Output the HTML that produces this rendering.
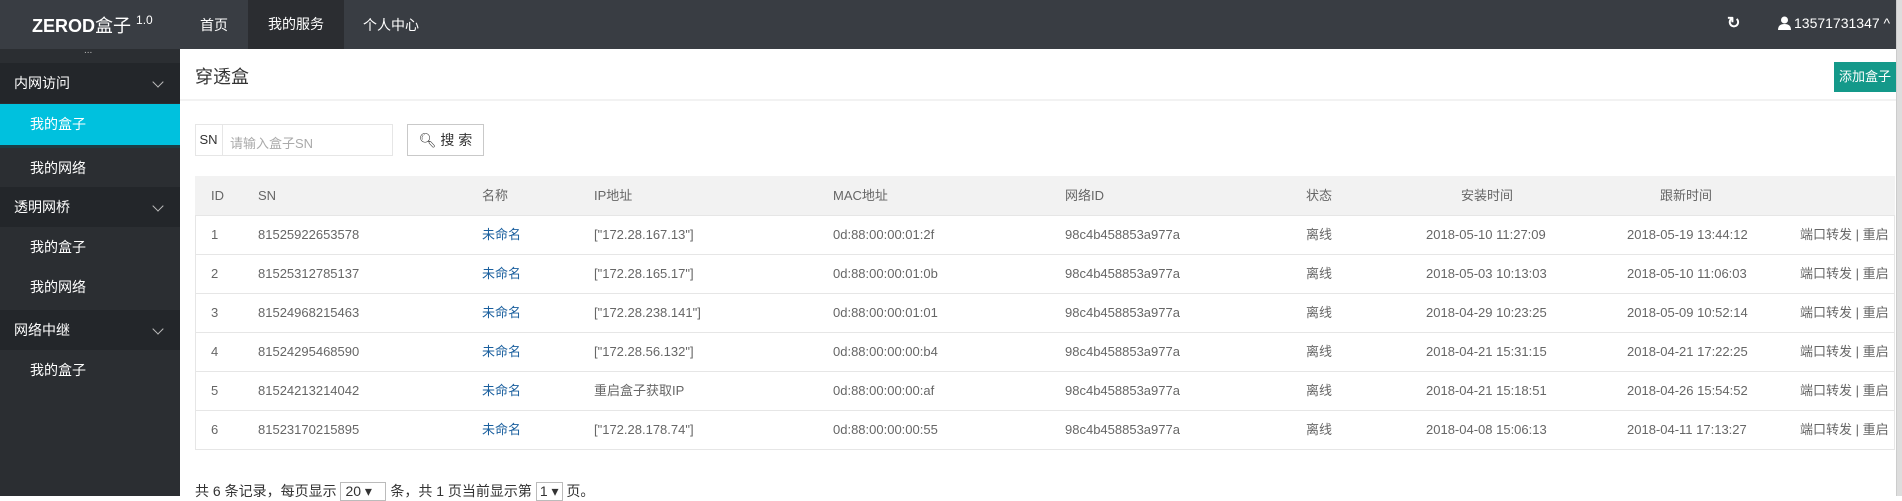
<!DOCTYPE html>
<html><head><meta charset="utf-8"><style>
*{margin:0;padding:0;box-sizing:border-box}
body{width:1902px;height:496px;overflow:hidden;background:#fff;font-family:"Liberation Sans","Noto Sans CJK SC",sans-serif;font-size:13px;color:#666;position:relative}
.abs{position:absolute;white-space:nowrap}
#hdr{position:absolute;left:0;top:0;width:1902px;height:49px;background:#393d43}
#side{position:absolute;left:0;top:49px;width:180px;height:447px;background:#2b2e32}
.sg{position:absolute;left:0;width:180px;height:40px;background:#23262a;color:#fff;font-size:14px;line-height:40px;padding-left:14px}
.si{position:absolute;left:0;width:180px;height:40px;color:#fff;font-size:14px;line-height:40px;padding-left:30px}
.chev{position:absolute;right:18px;top:15px;width:8px;height:8px;border-right:1px solid #bbb;border-bottom:1px solid #bbb;transform:rotate(45deg)}
.row{position:absolute;left:195px;width:1700px;height:39px;border-bottom:1px solid #e6e6e6;line-height:38px}
.row span{position:absolute}
.lnk{color:#1a5f9e}
#scroll{position:absolute;right:0;top:0;width:6px;height:496px;background:#ddd;border-left:1px solid #ccc}
</style></head><body>
<div id="hdr">
 <div class="abs" style="left:32px;top:12px;color:#fff;font-size:18px;font-weight:bold">ZEROD<span style="font-weight:normal">盒子</span> <sup style="font-size:12px;font-weight:normal;vertical-align:8px">1.0</sup></div>
 <div class="abs" style="left:200px;top:15px;color:#fff;font-size:14px">首页</div>
 <div class="abs" style="left:248px;top:0;width:96px;height:49px;background:#2b2d31;color:#fff;font-size:14px;line-height:49px;text-align:center">我的服务</div>
 <div class="abs" style="left:363px;top:15px;color:#fff;font-size:14px">个人中心</div>
 <div class="abs" style="left:1727px;top:13px;color:#fff;font-size:16px;font-weight:bold">↻</div>
 <svg class="abs" style="left:1778px;top:16px" width="13" height="14" viewBox="0 0 13 14"><circle cx="6.5" cy="4" r="3.5" fill="#fff"/><path d="M0 14 Q0 8 6.5 8 Q13 8 13 14Z" fill="#fff"/></svg>
 <div class="abs" style="left:1794px;top:15px;color:#fff;font-size:14px">13571731347 ^</div>
</div>
<div id="side">
 <div class="abs" style="left:84px;top:-4px;color:#bbb;font-size:10px">...</div>
 <div class="sg" style="top:14px">内网访问<i class="chev"></i></div>
 <div class="si" style="top:55px;height:41px;background:#00c1de">我的盒子</div>
 <div class="abs" style="left:0;top:96px;width:180px;height:3px;background:#1c3d44"></div>
 <div class="si" style="top:99px">我的网络</div>
 <div class="sg" style="top:138px">透明网桥<i class="chev"></i></div>
 <div class="si" style="top:178px">我的盒子</div>
 <div class="si" style="top:218px">我的网络</div>
 <div class="sg" style="top:261px">网络中继<i class="chev"></i></div>
 <div class="si" style="top:301px">我的盒子</div>
</div>
<div class="abs" style="left:195px;top:63px;color:#333;font-size:18px">穿透盒</div>
<div class="abs" style="left:180px;top:99px;width:1716px;height:2px;background:#f2f2f2"></div>
<div class="abs" style="left:1834px;top:62px;width:62px;height:30px;background:#14998a;color:#fff;font-size:13px;line-height:30px;text-align:center">添加盒子</div>
<div class="abs" style="left:195px;top:124px;width:198px;height:32px;border:1px solid #e6e6e6"></div>
<div class="abs" style="left:195px;top:124px;width:28px;height:32px;border-right:1px solid #e6e6e6;line-height:32px;text-align:center;color:#333">SN</div>
<div class="abs" style="left:230px;top:133px;color:#aaa">请输入盒子SN</div>
<div class="abs" style="left:407px;top:124px;width:77px;height:32px;border:1px solid #c9c9c9;line-height:30px;text-align:center;color:#333;font-size:14px">🔍︎ 搜 索</div>
<div class="abs" style="left:195px;top:176px;width:1700px;height:274px;border:1px solid #e6e6e6"></div>
<div class="row" style="top:176px;height:40px;background:#f2f2f2;line-height:40px">
 <span style="left:16px">ID</span><span style="left:63px">SN</span><span style="left:287px">名称</span><span style="left:399px">IP地址</span><span style="left:638px">MAC地址</span><span style="left:870px">网络ID</span><span style="left:1111px">状态</span><span style="left:1266px">安装时间</span><span style="left:1465px">跟新时间</span>
</div>
<div class="row" style="top:216px"><span style="left:16px">1</span><span style="left:63px">81525922653578</span><span class="lnk" style="left:287px">未命名</span><span style="left:399px">["172.28.167.13"]</span><span style="left:638px">0d:88:00:00:01:2f</span><span style="left:870px">98c4b458853a977a</span><span style="left:1111px">离线</span><span style="left:1231px">2018-05-10 11:27:09</span><span style="left:1432px">2018-05-19 13:44:12</span><span style="left:1605px">端口转发 | 重启</span></div>
<div class="row" style="top:255px"><span style="left:16px">2</span><span style="left:63px">81525312785137</span><span class="lnk" style="left:287px">未命名</span><span style="left:399px">["172.28.165.17"]</span><span style="left:638px">0d:88:00:00:01:0b</span><span style="left:870px">98c4b458853a977a</span><span style="left:1111px">离线</span><span style="left:1231px">2018-05-03 10:13:03</span><span style="left:1432px">2018-05-10 11:06:03</span><span style="left:1605px">端口转发 | 重启</span></div>
<div class="row" style="top:294px"><span style="left:16px">3</span><span style="left:63px">81524968215463</span><span class="lnk" style="left:287px">未命名</span><span style="left:399px">["172.28.238.141"]</span><span style="left:638px">0d:88:00:00:01:01</span><span style="left:870px">98c4b458853a977a</span><span style="left:1111px">离线</span><span style="left:1231px">2018-04-29 10:23:25</span><span style="left:1432px">2018-05-09 10:52:14</span><span style="left:1605px">端口转发 | 重启</span></div>
<div class="row" style="top:333px"><span style="left:16px">4</span><span style="left:63px">81524295468590</span><span class="lnk" style="left:287px">未命名</span><span style="left:399px">["172.28.56.132"]</span><span style="left:638px">0d:88:00:00:00:b4</span><span style="left:870px">98c4b458853a977a</span><span style="left:1111px">离线</span><span style="left:1231px">2018-04-21 15:31:15</span><span style="left:1432px">2018-04-21 17:22:25</span><span style="left:1605px">端口转发 | 重启</span></div>
<div class="row" style="top:372px"><span style="left:16px">5</span><span style="left:63px">81524213214042</span><span class="lnk" style="left:287px">未命名</span><span style="left:399px">重启盒子获取IP</span><span style="left:638px">0d:88:00:00:00:af</span><span style="left:870px">98c4b458853a977a</span><span style="left:1111px">离线</span><span style="left:1231px">2018-04-21 15:18:51</span><span style="left:1432px">2018-04-26 15:54:52</span><span style="left:1605px">端口转发 | 重启</span></div>
<div class="row" style="top:411px;border-bottom:none"><span style="left:16px">6</span><span style="left:63px">81523170215895</span><span class="lnk" style="left:287px">未命名</span><span style="left:399px">["172.28.178.74"]</span><span style="left:638px">0d:88:00:00:00:55</span><span style="left:870px">98c4b458853a977a</span><span style="left:1111px">离线</span><span style="left:1231px">2018-04-08 15:06:13</span><span style="left:1432px">2018-04-11 17:13:27</span><span style="left:1605px">端口转发 | 重启</span></div>
<div class="abs" style="left:195px;top:481px;color:#333;font-size:14px">共 6 条记录，每页显示 <span style="display:inline-block;border:1px solid #bbb;padding:0 4px;width:46px">20 ▾</span> 条，共 1 页当前显示第 <span style="display:inline-block;border:1px solid #bbb;padding:0 3px">1 ▾</span> 页。</div>
<div id="scroll"></div>
</body></html>
